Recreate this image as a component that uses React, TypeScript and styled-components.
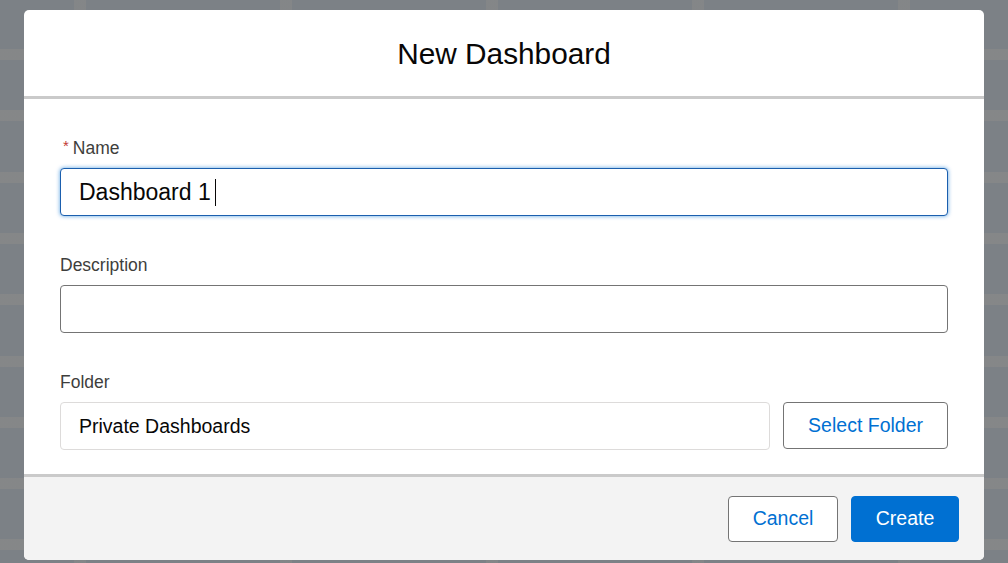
import styled, {createGlobalStyle} from 'styled-components'

const GlobalStyle = createGlobalStyle`
  html, body {
    margin: 0;
    padding: 0;
  }
  body {
    font-family: "Liberation Sans", Arial, sans-serif;
    background: #7c8186;
  }
`

const Backdrop = styled.div`
  width: 1008px;
  height: 563px;
  box-sizing: border-box;
  padding: 10px 24px 3px;
  background-color: #7c8186;
  background-image:
    repeating-linear-gradient(
      to bottom,
      transparent 0px,
      transparent 49px,
      rgba(150, 146, 140, 0.35) 49px,
      rgba(150, 146, 140, 0.35) 60px,
      transparent 60px,
      transparent 61.3px
    ),
    repeating-linear-gradient(
      to right,
      transparent 0px,
      transparent 74px,
      rgba(150, 146, 140, 0.3) 74px,
      rgba(150, 146, 140, 0.3) 86px,
      transparent 86px,
      transparent 206px
    );
`

const Modal = styled.div`
  width: 960px;
  height: 550px;
  display: flex;
  flex-direction: column;
  background: #fff;
  border-radius: 5px;
  overflow: hidden;
`

const Header = styled.header`
  height: 86px;
  flex-shrink: 0;
  display: flex;
  align-items: center;
  justify-content: center;
  border-bottom: 3px solid #cacaca;
`

const Title = styled.h2`
  margin: 0;
  font-size: 29.8px;
  font-weight: 400;
  line-height: 35px;
  color: #080707;
`

const Body = styled.div`
  flex: 1;
  display: flex;
  flex-direction: column;
  gap: 37px;
  padding: 37px 36px 0;
`

const Field = styled.div`
  display: flex;
  flex-direction: column;
  gap: 8px;
`

const Label = styled.label`
  display: flex;
  align-items: center;
  font-size: 17.5px;
  line-height: 24px;
  color: #3e3e3c;
`

const Required = styled.abbr`
  color: #c23934;
  font-size: 15px;
  margin: 0 4px 0 3px;
  text-decoration: none;
  position: relative;
  top: -2px;
`

const InputBox = styled.div<{$state: 'focus' | 'normal' | 'readonly'}>`
  height: 48px;
  flex-shrink: 0;
  box-sizing: border-box;
  display: flex;
  align-items: center;
  padding: 0 18px;
  border-radius: 4px;
  background: #fff;
  color: #080707;
  font-size: ${p => (p.$state === 'focus' ? '23px' : '19.5px')};
  border: 1px solid
    ${p => (p.$state === 'focus' ? '#1b5fae' : p.$state === 'normal' ? '#747474' : '#dddbda')};
  box-shadow: ${p => (p.$state === 'focus' ? '0 0 4px rgba(0, 112, 210, 0.65)' : 'none')};
`

const FolderInput = styled(InputBox)`
  flex: 1;
`

const Caret = styled.span`
  display: inline-block;
  width: 1px;
  height: 27px;
  margin-left: 4px;
  background: #080707;
`

const Row = styled.div`
  display: flex;
  gap: 13px;
`

const Button = styled.button<{$primary?: boolean}>`
  height: 47px;
  box-sizing: border-box;
  padding: 0 24px;
  border-radius: 4px;
  font-family: inherit;
  font-size: 19.5px;
  cursor: pointer;
  background: ${p => (p.$primary ? '#0070d2' : '#fff')};
  color: ${p => (p.$primary ? '#fff' : '#0070d2')};
  border: 1px solid ${p => (p.$primary ? '#0070d2' : '#747474')};
`

const Footer = styled.footer`
  height: 83px;
  flex-shrink: 0;
  display: flex;
  align-items: center;
  justify-content: flex-end;
  gap: 13px;
  padding: 0 25px;
  background: #f3f3f3;
  border-top: 3px solid #cacaca;
`

const FooterButton = styled(Button)`
  height: 46px;
  width: ${p => (p.$primary ? '108px' : '110px')};
  padding: 0;
`

export default function App() {
  return (
    <>
      <GlobalStyle />
      <Backdrop>
        <Modal>
          <Header>
            <Title>New Dashboard</Title>
          </Header>
          <Body>
            <Field>
              <Label>
                <Required title='required'>*</Required>Name
              </Label>
              <InputBox $state='focus'>
                Dashboard 1<Caret />
              </InputBox>
            </Field>
            <Field>
              <Label>Description</Label>
              <InputBox $state='normal' />
            </Field>
            <Field>
              <Label>Folder</Label>
              <Row>
                <FolderInput $state='readonly'>Private Dashboards</FolderInput>
                <Button>Select Folder</Button>
              </Row>
            </Field>
          </Body>
          <Footer>
            <FooterButton>Cancel</FooterButton>
            <FooterButton $primary>Create</FooterButton>
          </Footer>
        </Modal>
      </Backdrop>
    </>
  )
}
